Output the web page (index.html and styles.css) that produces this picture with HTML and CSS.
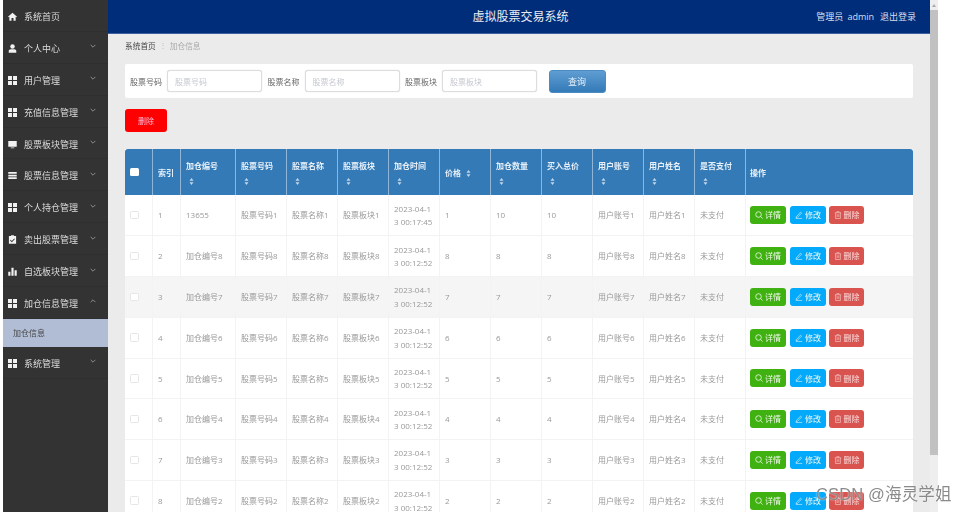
FILE: index.html
```html
<!DOCTYPE html>
<html lang="en">
<head>
    <meta charset="UTF-8">
    <meta name="viewport" content="width=device-width, initial-scale=1.0">
    <title>虚拟股票交易系统</title>
    <link rel="stylesheet" href="styles.css">
</head>
<body>
    <svg class="defs" width="0" height="0">
        <symbol id="i-grid" viewBox="0 0 10 10"><path d="M0 0h4.4v4.4H0zM5.6 0H10v4.4H5.6zM0 5.6h4.4V10H0zM5.6 5.6H10V10H5.6z"/></symbol>
        <symbol id="i-search" viewBox="0 0 10 10"><circle cx="4.4" cy="4.4" r="3.5" fill="none" stroke="currentColor"/><path d="M7 7l2.5 2.5" stroke="currentColor" fill="none"/></symbol>
        <symbol id="i-edit" viewBox="0 0 10 10"><path d="M1 9.3h8M1.6 7.2L7 1.4l1.3 1.2-5.5 5.6-1.5.3z" stroke="currentColor" stroke-width=".7" fill="none"/></symbol>
        <symbol id="i-trash" viewBox="0 0 10 10"><path d="M1 2.2h8M3.6 2V.8h2.8V2M2 2.4v7h6v-7M4 4v3.6M6 4v3.6" stroke="currentColor" stroke-width=".7" fill="none"/></symbol>
        <symbol id="i-down" viewBox="0 0 10 6"><path d="M1 1l4 4 4-4" stroke="currentColor" stroke-width="1.1" fill="none"/></symbol>
        <symbol id="i-sort" viewBox="0 0 6 9"><path d="M3 0l2.6 3.4H.4zM3 9L.4 5.6h5.2z"/></symbol>
    </svg>

    <aside class="sidebar">
        <a class="nav-item">
            <svg class="nav-icon" viewBox="0 0 10 10"><path d="M5 .8L0 5.2l.7.7.8-.7V9.6h2.4V6.6h2.2v3h2.4V5.2l.8.7.7-.7z"/></svg>
            <span>系统首页</span>
        </a>
        <a class="nav-item">
            <svg class="nav-icon" viewBox="0 0 10 10"><circle cx="5" cy="2.8" r="2.5"/><path d="M.8 9.6V7.8C.8 6.4 2 5.9 3 5.7h4c1 .2 2.2.7 2.2 2.1v1.8z"/></svg>
            <span>个人中心</span>
            <svg class="nav-arrow"><use href="#i-down"/></svg>
        </a>
        <a class="nav-item">
            <svg class="nav-icon"><use href="#i-grid"/></svg>
            <span>用户管理</span>
            <svg class="nav-arrow"><use href="#i-down"/></svg>
        </a>
        <a class="nav-item">
            <svg class="nav-icon"><use href="#i-grid"/></svg>
            <span>充值信息管理</span>
            <svg class="nav-arrow"><use href="#i-down"/></svg>
        </a>
        <a class="nav-item">
            <svg class="nav-icon" viewBox="0 0 10 10"><path d="M.3 1h9.4v6.4H.3zM3 8.2h4v1.1H3z"/></svg>
            <span>股票板块管理</span>
            <svg class="nav-arrow"><use href="#i-down"/></svg>
        </a>
        <a class="nav-item">
            <svg class="nav-icon" viewBox="0 0 10 10"><path d="M.3 1.2h9.4v1.9H.3zM.3 4.1h9.4V6H.3zM.3 7h9.4v1.9H.3z"/></svg>
            <span>股票信息管理</span>
            <svg class="nav-arrow"><use href="#i-down"/></svg>
        </a>
        <a class="nav-item">
            <svg class="nav-icon"><use href="#i-grid"/></svg>
            <span>个人持仓管理</span>
            <svg class="nav-arrow"><use href="#i-down"/></svg>
        </a>
        <a class="nav-item">
            <svg class="nav-icon" viewBox="0 0 10 10"><path fill-rule="evenodd" d="M1 1.2h2.4V.4h3.2v.8H9v8.4H1zM3 5.4l-.7.7 2 2 3.4-3.6-.7-.7-2.7 2.9z"/></svg>
            <span>卖出股票管理</span>
            <svg class="nav-arrow"><use href="#i-down"/></svg>
        </a>
        <a class="nav-item">
            <svg class="nav-icon" viewBox="0 0 10 10"><path d="M.3 5.4h2.4v4.2H.3zM3.8.8h2.4v8.8H3.8zM7.3 3.6h2.4v6H7.3z"/></svg>
            <span>自选板块管理</span>
            <svg class="nav-arrow"><use href="#i-down"/></svg>
        </a>
        <a class="nav-item">
            <svg class="nav-icon"><use href="#i-grid"/></svg>
            <span>加仓信息管理</span>
            <svg class="nav-arrow nav-arrow-up"><use href="#i-down"/></svg>
        </a>
        <a class="nav-sub">加仓信息</a>
        <a class="nav-item">
            <svg class="nav-icon"><use href="#i-grid"/></svg>
            <span>系统管理</span>
            <svg class="nav-arrow"><use href="#i-down"/></svg>
        </a>
    </aside>

    <div class="main">
        <header class="topbar">
            <div class="topbar-title">虚拟股票交易系统</div>
            <div class="topbar-user">
                <span>管理员 admin</span>
                <span>退出登录</span>
            </div>
        </header>

        <div class="content">
            <div class="breadcrumb">
                <span class="crumb-home">系统首页</span>
                <span class="crumb-sep">⋮</span>
                <span class="crumb-now">加仓信息</span>
            </div>

            <form class="search-card">
                <label>股票号码</label>
                <input type="text" placeholder="股票号码">
                <label>股票名称</label>
                <input type="text" placeholder="股票名称">
                <label>股票板块</label>
                <input type="text" placeholder="股票板块">
                <button type="button" class="btn-query">查询</button>
            </form>

            <button type="button" class="btn-remove">删除</button>

            <table class="data-table">
                <colgroup>
                    <col class="col-check"><col class="col-index"><col class="col-code">
                    <col class="col-std" span="10"><col>
                </colgroup>
                <thead>
                    <tr>
                        <th><span class="check check-head"></span></th>
                        <th>索引</th>
                        <th>加仓编号<svg class="sort sort-block"><use href="#i-sort"/></svg></th>
                        <th>股票号码<svg class="sort sort-block"><use href="#i-sort"/></svg></th>
                        <th>股票名称<svg class="sort sort-block"><use href="#i-sort"/></svg></th>
                        <th>股票板块<svg class="sort sort-block"><use href="#i-sort"/></svg></th>
                        <th>加仓时间<svg class="sort sort-block"><use href="#i-sort"/></svg></th>
                        <th>价格<svg class="sort"><use href="#i-sort"/></svg></th>
                        <th>加仓数量<svg class="sort sort-block"><use href="#i-sort"/></svg></th>
                        <th>买入总价<svg class="sort sort-block"><use href="#i-sort"/></svg></th>
                        <th>用户账号<svg class="sort sort-block"><use href="#i-sort"/></svg></th>
                        <th>用户姓名<svg class="sort sort-block"><use href="#i-sort"/></svg></th>
                        <th>是否支付<svg class="sort sort-block"><use href="#i-sort"/></svg></th>
                        <th>操作</th>
                    </tr>
                </thead>
                <tbody>
                    <tr>
                        <td><span class="check"></span></td><td>1</td><td>13655</td><td>股票号码1</td><td>股票名称1</td><td>股票板块1</td>
                        <td class="time">2023-04-1<br>3 00:17:45</td><td>1</td><td>10</td><td>10</td><td>用户账号1</td><td>用户姓名1</td><td>未支付</td>
                        <td class="actions"><a class="act act-view"><svg><use href="#i-search"/></svg>详情</a><a class="act act-edit"><svg><use href="#i-edit"/></svg>修改</a><a class="act act-del"><svg><use href="#i-trash"/></svg>删除</a></td>
                    </tr>
                    <tr>
                        <td><span class="check"></span></td><td>2</td><td>加仓编号8</td><td>股票号码8</td><td>股票名称8</td><td>股票板块8</td>
                        <td class="time">2023-04-1<br>3 00:12:52</td><td>8</td><td>8</td><td>8</td><td>用户账号8</td><td>用户姓名8</td><td>未支付</td>
                        <td class="actions"><a class="act act-view"><svg><use href="#i-search"/></svg>详情</a><a class="act act-edit"><svg><use href="#i-edit"/></svg>修改</a><a class="act act-del"><svg><use href="#i-trash"/></svg>删除</a></td>
                    </tr>
                    <tr class="row-hover">
                        <td><span class="check"></span></td><td>3</td><td>加仓编号7</td><td>股票号码7</td><td>股票名称7</td><td>股票板块7</td>
                        <td class="time">2023-04-1<br>3 00:12:52</td><td>7</td><td>7</td><td>7</td><td>用户账号7</td><td>用户姓名7</td><td>未支付</td>
                        <td class="actions"><a class="act act-view"><svg><use href="#i-search"/></svg>详情</a><a class="act act-edit"><svg><use href="#i-edit"/></svg>修改</a><a class="act act-del"><svg><use href="#i-trash"/></svg>删除</a></td>
                    </tr>
                    <tr>
                        <td><span class="check"></span></td><td>4</td><td>加仓编号6</td><td>股票号码6</td><td>股票名称6</td><td>股票板块6</td>
                        <td class="time">2023-04-1<br>3 00:12:52</td><td>6</td><td>6</td><td>6</td><td>用户账号6</td><td>用户姓名6</td><td>未支付</td>
                        <td class="actions"><a class="act act-view"><svg><use href="#i-search"/></svg>详情</a><a class="act act-edit"><svg><use href="#i-edit"/></svg>修改</a><a class="act act-del"><svg><use href="#i-trash"/></svg>删除</a></td>
                    </tr>
                    <tr>
                        <td><span class="check"></span></td><td>5</td><td>加仓编号5</td><td>股票号码5</td><td>股票名称5</td><td>股票板块5</td>
                        <td class="time">2023-04-1<br>3 00:12:52</td><td>5</td><td>5</td><td>5</td><td>用户账号5</td><td>用户姓名5</td><td>未支付</td>
                        <td class="actions"><a class="act act-view"><svg><use href="#i-search"/></svg>详情</a><a class="act act-edit"><svg><use href="#i-edit"/></svg>修改</a><a class="act act-del"><svg><use href="#i-trash"/></svg>删除</a></td>
                    </tr>
                    <tr>
                        <td><span class="check"></span></td><td>6</td><td>加仓编号4</td><td>股票号码4</td><td>股票名称4</td><td>股票板块4</td>
                        <td class="time">2023-04-1<br>3 00:12:52</td><td>4</td><td>4</td><td>4</td><td>用户账号4</td><td>用户姓名4</td><td>未支付</td>
                        <td class="actions"><a class="act act-view"><svg><use href="#i-search"/></svg>详情</a><a class="act act-edit"><svg><use href="#i-edit"/></svg>修改</a><a class="act act-del"><svg><use href="#i-trash"/></svg>删除</a></td>
                    </tr>
                    <tr>
                        <td><span class="check"></span></td><td>7</td><td>加仓编号3</td><td>股票号码3</td><td>股票名称3</td><td>股票板块3</td>
                        <td class="time">2023-04-1<br>3 00:12:52</td><td>3</td><td>3</td><td>3</td><td>用户账号3</td><td>用户姓名3</td><td>未支付</td>
                        <td class="actions"><a class="act act-view"><svg><use href="#i-search"/></svg>详情</a><a class="act act-edit"><svg><use href="#i-edit"/></svg>修改</a><a class="act act-del"><svg><use href="#i-trash"/></svg>删除</a></td>
                    </tr>
                    <tr>
                        <td><span class="check"></span></td><td>8</td><td>加仓编号2</td><td>股票号码2</td><td>股票名称2</td><td>股票板块2</td>
                        <td class="time">2023-04-1<br>3 00:12:52</td><td>2</td><td>2</td><td>2</td><td>用户账号2</td><td>用户姓名2</td><td>未支付</td>
                        <td class="actions"><a class="act act-view"><svg><use href="#i-search"/></svg>详情</a><a class="act act-edit"><svg><use href="#i-edit"/></svg>修改</a><a class="act act-del"><svg><use href="#i-trash"/></svg>删除</a></td>
                    </tr>
                </tbody>
            </table>
        </div>
    </div>

    <div class="scrollbar">
        <div class="scroll-arrow"></div>
        <div class="scroll-thumb"></div>
    </div>

    <div class="watermark">CSDN @海灵学姐</div>
</body>
</html>
```

FILE: styles.css
```css
* {
    box-sizing: border-box;
}

html, body {
    height: 100%;
}

body {
    display: flex;
    margin: 0;
    padding-left: 3px;
    height: 512px;
    overflow: hidden;
    position: relative;
    background: #fff;
    font-family: "Open Sans", "Noto Sans CJK SC", sans-serif;
    font-size: 8px;
    color: #999;
}

.defs {
    position: absolute;
}

/* Left menu */
.sidebar {
    flex: none;
    width: 105px;
    background: #333;
    filter: blur(0.35px);
}

.nav-item {
    display: flex;
    align-items: center;
    height: 31.9px;
    padding: 2px 0 0 5px;
    font-size: 9px;
    color: #ddd;
    border-bottom: 1px solid #2f2f2f;
}

.nav-item span {
    flex: 1;
}

.nav-icon {
    flex: none;
    width: 9px;
    height: 9px;
    margin-right: 7px;
    fill: #f2f2f2;
}

.nav-arrow {
    flex: none;
    width: 6px;
    height: 4px;
    margin: 0 12px 4px 0;
    color: #bbb;
}

.nav-arrow-up {
    transform: rotate(180deg);
}

.nav-sub {
    display: flex;
    align-items: center;
    height: 28px;
    padding: 0 0 1px 10px;
    background: #b1bdd5;
    color: #444;
}

/* Header and page area */
.main {
    flex: none;
    width: 822px;
    background: #ebebeb;
    filter: blur(0.35px);
}

.topbar {
    display: flex;
    align-items: center;
    justify-content: space-between;
    position: relative;
    height: 33.5px;
    padding-right: 14px;
    background: #002d79;
    border-bottom: 1px solid #3d5f9c;
    color: #d5dded;
    font-size: 9px;
}

.topbar-title {
    flex: 1;
    padding-left: 117px;
    text-align: center;
    color: #e8edf5;
    font-size: 12px;
}

.topbar-user span:first-child {
    word-spacing: 2px;
}

.topbar-user span + span {
    margin-left: 3.5px;
}

.content {
    padding: 0 17px;
}

.breadcrumb {
    display: flex;
    align-items: center;
    height: 30.5px;
    padding-bottom: 7px;
    font-size: 7.7px;
}

.crumb-home {
    color: #444;
}

.crumb-sep {
    width: 14px;
    text-align: center;
    color: #bbb;
}

.crumb-now {
    color: #aaa;
}

.search-card {
    display: flex;
    align-items: center;
    width: 788px;
    height: 34px;
    padding-left: 5px;
    background: #fff;
    border-radius: 2px;
    color: #666;
}

.search-card input {
    width: 95px;
    height: 22px;
    margin: 0 5.5px 0 5px;
    padding: 0 7px;
    border: 1px solid #ddd;
    border-radius: 3px;
    background: #fff;
    box-shadow: 0 0 1px #ccc;
    font: inherit;
}

.search-card input::placeholder {
    color: #c4c8d0;
}

.btn-query {
    width: 57px;
    height: 23px;
    margin-left: 6px;
    border: 1px solid #4a8bc4;
    border-radius: 3px;
    background: linear-gradient(#5f9dd3, #337ab7);
    color: #e8f0f8;
    font: inherit;
    font-size: 9px;
}

.btn-remove {
    display: block;
    width: 42px;
    height: 22.5px;
    margin: 11px 0 17.5px;
    border: 0;
    border-radius: 3px;
    background: #f00;
    color: #fbd;
    font: inherit;
}

/* Table */
.data-table {
    width: 788px;
    table-layout: fixed;
    border-collapse: collapse;
    background: #fff;
}

.col-check { width: 27.5px; }
.col-index { width: 28px; }
.col-code { width: 55px; }
.col-std { width: 51px; }

.data-table th {
    height: 46px;
    padding: 0 5px;
    background: #337ab7;
    border-left: 1px solid #8fb5d8;
    color: #e8f0f8;
    text-align: left;
    font-weight: 700;
    line-height: 11px;
}

.data-table th:first-child {
    border-left: 0;
    border-top-left-radius: 3px;
}

.data-table th:last-child {
    padding-left: 4px;
    border-top-right-radius: 3px;
}

.data-table td {
    height: 40.75px;
    padding: 0 5px;
    border-left: 1px solid #f3f3f3;
    border-bottom: 1px solid #f3f3f3;
    line-height: 13.5px;
}

.data-table td:first-child {
    border-left: 0;
}

.data-table .time {
    font-size: 8px;
    white-space: nowrap;
}

.row-hover td {
    background: #f5f5f5;
}

.check {
    display: block;
    width: 8.5px;
    height: 8.5px;
    border: 1px solid #e6e6e6;
    border-radius: 1.5px;
    background: #fff;
}

.check-head {
    border: 0;
}

.sort {
    width: 5px;
    height: 7px;
    margin-left: 5px;
    fill: #c3d7ea;
    vertical-align: -1px;
}

.sort-block {
    display: block;
    margin: 7px 0 0 3px;
}

.data-table .actions {
    padding-left: 4px;
    white-space: nowrap;
}

.act {
    display: inline-flex;
    align-items: center;
    justify-content: center;
    width: 36px;
    height: 18px;
    margin-right: 4px;
    border-radius: 3px;
    color: #f3f8ee;
    vertical-align: middle;
}

.act svg {
    width: 8px;
    height: 8px;
    margin-right: 2px;
}

.act-view { background: #3fb211; }
.act-edit { background: #03a9fb; margin-right: 3px; }
.act-del { width: 35px; background: #d9534f; color: #f8dede; }

/* Fake window scrollbar */
.scrollbar {
    flex: none;
    width: 8px;
    background: #eee;
    padding-top: 2px;
}

.scroll-arrow {
    width: 0;
    height: 0;
    margin: 2px auto 3px;
    border: 2px solid transparent;
    border-top: 0;
    border-bottom: 3px solid #aaa;
}

.scroll-thumb {
    height: 445px;
    background: #c1c1c1;
}

.watermark {
    position: absolute;
    left: 816px;
    top: 484px;
    font-family: "Liberation Sans", "Noto Sans CJK SC", sans-serif;
    font-size: 16.5px;
    letter-spacing: 0.15px;
    line-height: 20px;
    color: #8a8a8a;
    text-shadow: 0 0 2px rgba(255, 255, 255, 0.8);
    white-space: nowrap;
}
```
